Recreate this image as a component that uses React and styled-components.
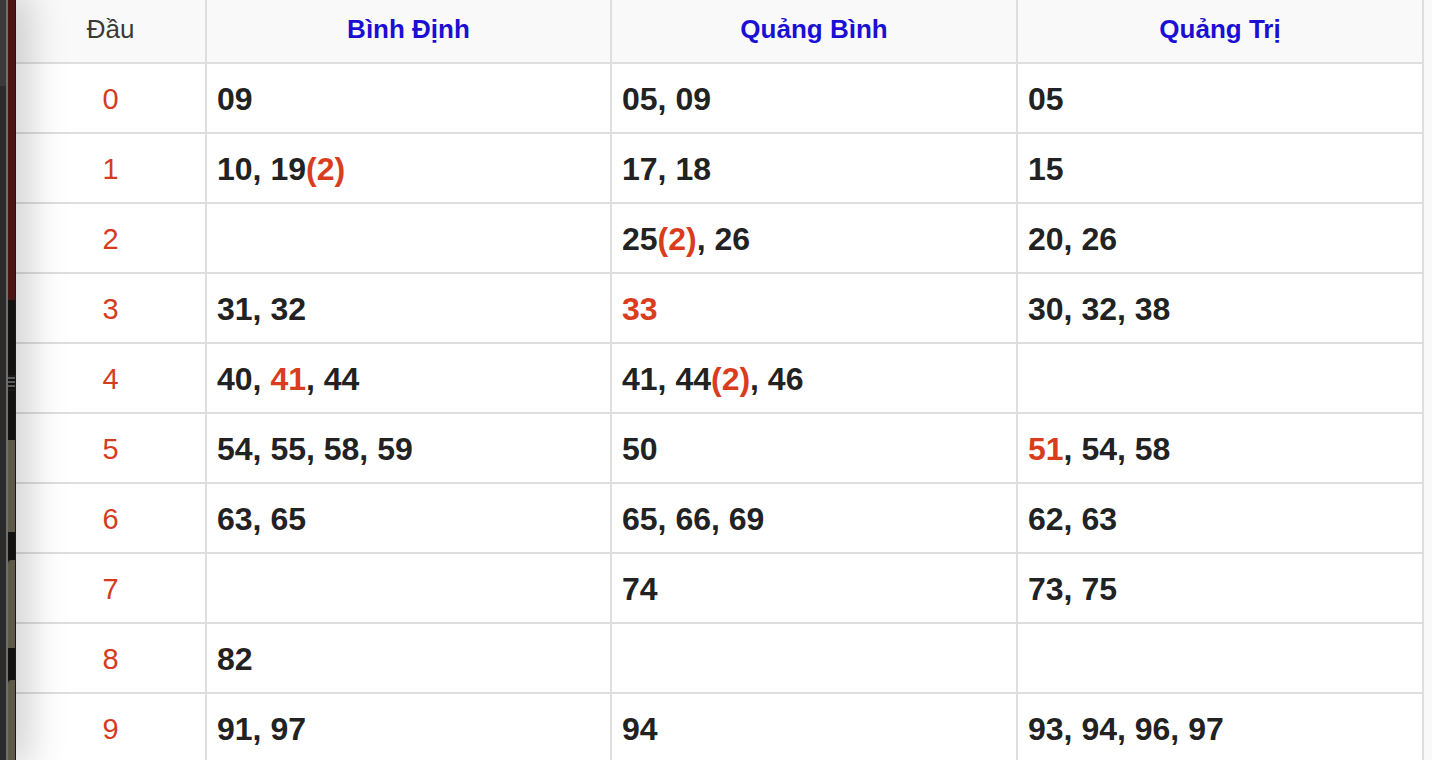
import React from "react";
import styled, { createGlobalStyle } from "styled-components";

const Global = createGlobalStyle`
  html, body { margin: 0; padding: 0; background: #f9f9f9; }
  body { font-family: "Liberation Sans", Arial, sans-serif; overflow: hidden; }
`;

const Page = styled.div`
  display: flex;
  width: 1432px;
  height: 760px;
  overflow: hidden;
  background: #f9f9f9;
`;

const Strip = styled.aside`
  position: relative;
  z-index: 2;
  flex: 0 0 16px;
  display: flex;
  height: 760px;
  background: #1a1a1a;
  box-shadow: 0 0 42px 7px rgba(0, 0, 0, 0.27);
`;

const Edge = styled.div`
  width: 6px;
  background: linear-gradient(to bottom, #3a3a3a 0 86px, #2b2b2b 86px);
`;

const Sep = styled.div`
  width: 2px;
  background: #6f6f6f;
`;

const Rail = styled.div`
  width: 7px;
  display: flex;
  flex-direction: column;
`;

const Seg = styled.div`
  height: ${(p) => p.$h}px;
  flex: ${(p) => (p.$grow ? "1 1 auto" : "0 0 auto")};
  background: ${(p) => p.$c};
  border-top-left-radius: ${(p) => (p.$round ? "4px" : "0")};
`;

const Grip = styled.div`
  height: 12px;
  margin: 2px 0;
  background: repeating-linear-gradient(to bottom, #5a5a5a 0 2px, #141210 2px 4px);
`;

const Table = styled.div`
  display: grid;
  grid-template-columns: 191px 405px 406px 406px;
  grid-template-rows: 64px;
  grid-auto-rows: 70px;
  align-content: start;
`;

const Cell = styled.div`
  box-sizing: border-box;
  display: flex;
  align-items: center;
  justify-content: ${(p) => (p.$center ? "center" : "flex-start")};
  padding: 0 ${(p) => (p.$center ? "0" : "11px")};
  border-right: 2px solid #dedede;
  border-bottom: 2px solid #dedede;
  background: #ffffff;
  white-space: pre;
`;

const HeadCell = styled(Cell)`
  background: #f9f9f9;
  font-size: 26px;
  font-weight: ${(p) => (p.$plain ? 400 : 700)};
  color: ${(p) => (p.$plain ? "#3a3a3a" : "#1c0fd4")};
  padding-bottom: 4px;
`;

const Index = styled(Cell)`
  font-size: 29px;
  font-weight: 400;
  color: #d43c1f;
  padding-top: 2px;
`;

const Nums = styled(Cell)`
  font-size: 32px;
  font-weight: 700;
  color: #222222;
  padding-left: 10px;
  padding-top: 2px;
`;

const Line = styled.span`
  display: inline;
`;

const Hot = styled.span`
  color: #d93d1e;
`;

const heads = ["Bình Định", "Quảng Bình", "Quảng Trị"];

const rows = [
  ["0", "09", "05, 09", "05"],
  ["1", "10, 19[(2)]", "17, 18", "15"],
  ["2", "", "25[(2)], 26", "20, 26"],
  ["3", "31, 32", "[33]", "30, 32, 38"],
  ["4", "40, [41], 44", "41, 44[(2)], 46", ""],
  ["5", "54, 55, 58, 59", "50", "[51], 54, 58"],
  ["6", "63, 65", "65, 66, 69", "62, 63"],
  ["7", "", "74", "73, 75"],
  ["8", "82", "", ""],
  ["9", "91, 97", "94", "93, 94, 96, 97"],
];

function renderNums(text) {
  return (
    <Line>
      {text
        .split(/(\[[^\]]*\])/)
        .filter(Boolean)
        .map((part, i) =>
          part.startsWith("[") ? (
            <Hot key={i}>{part.slice(1, -1)}</Hot>
          ) : (
            <React.Fragment key={i}>{part}</React.Fragment>
          )
        )}
    </Line>
  );
}

export default function App() {
  return (
    <>
      <Global />
      <Page>
        <Strip>
          <Edge />
          <Sep />
          <Rail>
            <Seg $h={300} $c="#4a1512" />
            <Seg $h={75} $c="#141210" />
            <Grip />
            <Seg $h={49} $c="#141210" />
            <Seg $h={92} $c="#5e5949" />
            <Seg $h={28} $c="#141210" />
            <Seg $h={88} $c="#5e5949" $round />
            <Seg $h={32} $c="#141210" />
            <Seg $grow $c="#5e5949" $round />
          </Rail>
        </Strip>
        <Table>
          <HeadCell $center $plain>Đầu</HeadCell>
          {heads.map((h) => (
            <HeadCell key={h} $center>{h}</HeadCell>
          ))}
          {rows.map(([d, ...cols]) => (
            <React.Fragment key={d}>
              <Index $center>{d}</Index>
              {cols.map((c, i) => (
                <Nums key={i}>{renderNums(c)}</Nums>
              ))}
            </React.Fragment>
          ))}
        </Table>
      </Page>
    </>
  );
}
